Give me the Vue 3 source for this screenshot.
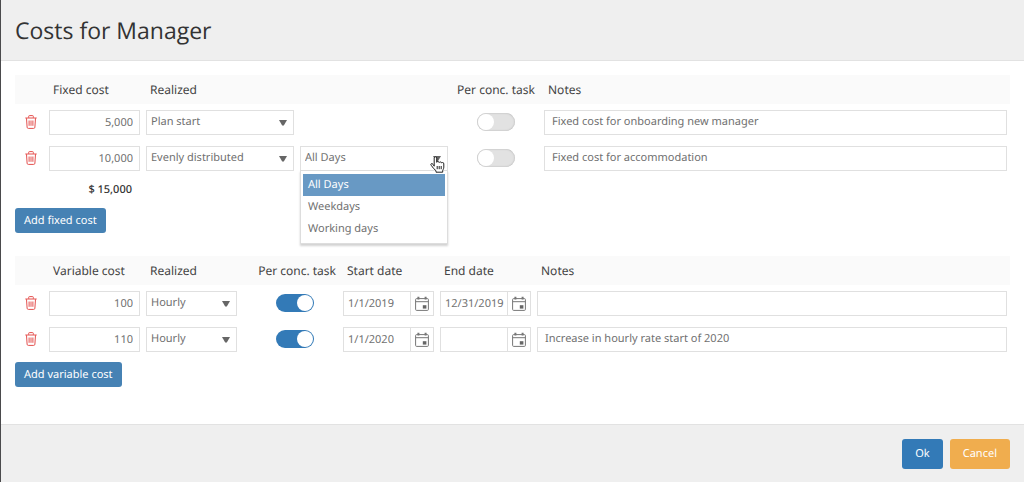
<script setup>
import { ref, reactive, computed } from 'vue'

const dayOptions = ['All Days', 'Weekdays', 'Working days']
const openList = ref(1)

const fixedCosts = reactive([
  { cost: '5,000', realized: 'Plan start', days: null, perTask: false, notes: 'Fixed cost for onboarding new manager' },
  { cost: '10,000', realized: 'Evenly distributed', days: 'All Days', perTask: false, notes: 'Fixed cost for accommodation' },
])

const variableCosts = reactive([
  { cost: '100', realized: 'Hourly', perTask: true, start: '1/1/2019', end: '12/31/2019', notes: '' },
  { cost: '110', realized: 'Hourly', perTask: true, start: '1/1/2020', end: '', notes: 'Increase in hourly rate start of 2020' },
])

const total = computed(() => {
  const sum = fixedCosts.reduce((acc, row) => acc + (Number(row.cost.replace(/,/g, '')) || 0), 0)
  return '$ ' + sum.toLocaleString('en-US')
})

function addFixed() {
  fixedCosts.push({ cost: '', realized: 'Plan start', days: null, perTask: false, notes: '' })
}

function addVariable() {
  variableCosts.push({ cost: '', realized: 'Hourly', perTask: true, start: '', end: '', notes: '' })
}

function pickDay(row, option) {
  row.days = option
  openList.value = -1
}
</script>

<template>
  <main class="dialog">
    <header class="dialog-header">
      <h1>Costs for Manager</h1>
    </header>

    <div class="dialog-body">
      <section>
        <table>
          <colgroup>
            <col class="col-icon" /><col class="col-field" /><col class="col-wide" /><col class="col-wide" /><col class="col-task" /><col />
          </colgroup>
          <thead>
            <tr>
              <th></th>
              <th>Fixed cost</th>
              <th>Realized</th>
              <th></th>
              <th class="center">Per conc. task</th>
              <th>Notes</th>
            </tr>
          </thead>
          <tbody>
            <tr v-for="(row, i) in fixedCosts" :key="i">
              <td>
                <button class="trash" type="button" aria-label="Delete fixed cost" @click="fixedCosts.splice(i, 1)">
                  <svg viewBox="0 0 12 14" width="12" height="14"><path d="M.3 3h11.4M3.7 2.8V1.3q0-.7.7-.7h3.2q.7 0 .7.7v1.5M1.5 3.2l.6 9q.1 1.2 1.2 1.2h5.4q1.1 0 1.2-1.2l.6-9M4.1 5.5v5.3M6 5.5v5.3M7.9 5.5v5.3" /></svg>
                </button>
              </td>
              <td><input v-model="row.cost" class="field number" type="text" aria-label="Fixed cost" /></td>
              <td>
                <div class="picker">
                  <select v-model="row.realized" class="field" aria-label="Realized">
                    <option>Plan start</option>
                    <option>Evenly distributed</option>
                  </select>
                  <svg class="arrow" viewBox="0 0 8 6" width="8" height="6"><path d="M0 0h8L4.8 5.6H3.2z" /></svg>
                </div>
              </td>
              <td>
                <div v-if="row.days" class="picker">
                  <select v-model="row.days" class="field" aria-label="Days">
                    <option v-for="o in dayOptions" :key="o">{{ o }}</option>
                  </select>
                  <svg class="arrow" viewBox="0 0 8 6" width="8" height="6"><path d="M0 0h8L4.8 5.6H3.2z" /></svg>
                  <ul v-if="openList === i" class="menu" role="listbox" aria-label="Days">
                    <li v-for="o in dayOptions" :key="o" role="option" :aria-selected="o === row.days" :class="{ active: o === row.days }" @click="pickDay(row, o)">{{ o }}</li>
                  </ul>
                  <svg v-if="openList === i" class="pointer" viewBox="0 0 15 17" width="15" height="17"><path d="M4.2 10.2V2.1q0-1.3 1.2-1.3t1.3 1.3v4.2q.3-.8 1.2-.8 1 0 1.3 1 .3-.6 1.1-.6 1 0 1.3 1 .3-.4 1-.4 1.2 0 1.2 1.4v3.2q0 1.3-.6 2.3l-.5 1v1.8H6v-1.5L3.7 12.6 1.2 9.3q-.8-1 .1-1.6.8-.5 1.7.6zM7.2 10v3.2M9.2 10v3.2M11.2 10v3.2" /></svg>
                </div>
              </td>
              <td class="center"><input v-model="row.perTask" class="switch" type="checkbox" aria-label="Per concurrent task" /></td>
              <td><input v-model="row.notes" class="field notes" type="text" aria-label="Notes" /></td>
            </tr>
          </tbody>
          <tfoot>
            <tr>
              <td></td>
              <td class="total">{{ total }}</td>
              <td colspan="4"></td>
            </tr>
          </tfoot>
        </table>
        <button class="add" type="button" @click="addFixed">Add fixed cost</button>
      </section>

      <section>
        <table>
          <colgroup>
            <col class="col-icon" /><col class="col-field" /><col class="col-field" /><col class="col-toggle" /><col class="col-field" /><col class="col-field" /><col />
          </colgroup>
          <thead>
            <tr>
              <th></th>
              <th>Variable cost</th>
              <th>Realized</th>
              <th class="right">Per conc. task</th>
              <th>Start date</th>
              <th>End date</th>
              <th>Notes</th>
            </tr>
          </thead>
          <tbody>
            <tr v-for="(row, i) in variableCosts" :key="i">
              <td>
                <button class="trash" type="button" aria-label="Delete variable cost" @click="variableCosts.splice(i, 1)">
                  <svg viewBox="0 0 12 14" width="12" height="14"><path d="M.3 3h11.4M3.7 2.8V1.3q0-.7.7-.7h3.2q.7 0 .7.7v1.5M1.5 3.2l.6 9q.1 1.2 1.2 1.2h5.4q1.1 0 1.2-1.2l.6-9M4.1 5.5v5.3M6 5.5v5.3M7.9 5.5v5.3" /></svg>
                </button>
              </td>
              <td><input v-model="row.cost" class="field number" type="text" aria-label="Variable cost" /></td>
              <td>
                <div class="picker">
                  <select v-model="row.realized" class="field" aria-label="Realized">
                    <option>Hourly</option>
                  </select>
                  <svg class="arrow" viewBox="0 0 8 6" width="8" height="6"><path d="M0 0h8L4.8 5.6H3.2z" /></svg>
                </div>
              </td>
              <td class="toggle-cell"><input v-model="row.perTask" class="switch" type="checkbox" aria-label="Per concurrent task" /></td>
              <td v-for="key in ['start', 'end']" :key="key">
                <div class="date">
                  <input v-model="row[key]" type="text" :aria-label="key === 'start' ? 'Start date' : 'End date'" />
                  <button type="button" aria-label="Open calendar">
                    <svg viewBox="0 0 14 15" width="14" height="15"><path d="M1.6 2.6h10.8q1 0 1 1v9.8q0 1-1 1H1.6q-1 0-1-1V3.6q0-1 1-1zM.6 5.7h12.8" /><path d="M3.4.8v2.6M10.6.8v2.6" class="rings" /><path d="M7.8 9.2h3.6v3.4H7.8z" class="day" /></svg>
                  </button>
                </div>
              </td>
              <td><input v-model="row.notes" class="field notes" type="text" aria-label="Notes" /></td>
            </tr>
          </tbody>
        </table>
        <button class="add" type="button" @click="addVariable">Add variable cost</button>
      </section>
    </div>

    <footer class="dialog-footer">
      <button class="ok" type="button">Ok</button>
      <button class="cancel" type="button">Cancel</button>
    </footer>
  </main>
</template>

<style>
body {
  margin: 0;
}
</style>

<style scoped>
.dialog,
.dialog * {
  box-sizing: border-box;
}
.dialog {
  display: flex;
  flex-direction: column;
  min-height: 100vh;
  border-left: 1px solid #4a4a4c;
  background: #fff;
  color: #444;
  font-family: "Noto Sans", "Open Sans", sans-serif;
  font-size: 11px;
  line-height: 16px;
  text-rendering: geometricPrecision;
}
button,
input,
select {
  margin: 0;
  font: inherit;
  text-rendering: inherit;
}
button {
  cursor: pointer;
}
.dialog-header {
  padding: 14px;
  background: #efefef;
  border-bottom: 1px solid #e2e2e2;
}
h1 {
  margin: 0;
  color: #333;
  font-family: "Open Sans", "Noto Sans", sans-serif;
  font-size: 23px;
  font-weight: 400;
  line-height: 32px;
}
.dialog-body {
  display: flex;
  flex: 1;
  flex-direction: column;
  gap: 23px;
  padding: 14px;
}
table {
  width: 100%;
  border-collapse: collapse;
  table-layout: fixed;
}
.col-icon {
  width: 31px;
}
.col-field {
  width: 97px;
}
.col-wide {
  width: 154px;
}
.col-task {
  width: 90px;
}
.col-toggle {
  width: 100px;
}
th {
  height: 29px;
  padding: 0 6px;
  padding-left: 7px;
  background: #fafafa;
  font-size: 12px;
  font-weight: 400;
  text-align: left;
  white-space: nowrap;
}
th.center {
  padding: 0;
  text-align: center;
}
th.right {
  padding: 0 4px;
  text-align: right;
}
td {
  height: 36px;
  padding: 0 3px;
  vertical-align: middle;
}
.center {
  text-align: center;
}
.toggle-cell {
  padding-left: 36px;
}
.field {
  display: block;
  width: 100%;
  height: 25px;
  padding: 0 4px;
  border: 1px solid #e0e0e0;
  border-radius: 0;
  outline: 0;
  background: #fff;
  color: #707070;
  appearance: none;
}
.number {
  padding: 1px 6px 0;
  text-align: right;
}
.notes {
  padding: 0 7px 2px;
}
.picker {
  position: relative;
}
.arrow {
  position: absolute;
  top: 10px;
  right: 7px;
  fill: #666;
  pointer-events: none;
}
.menu {
  position: absolute;
  z-index: 1;
  top: 24px;
  left: 0;
  width: 100%;
  margin: 0;
  padding: 3px 2px;
  border: 1px solid #ddd;
  background: #fff;
  box-shadow: 0 2px 2px rgba(0, 0, 0, 0.18);
  color: #707070;
  list-style: none;
}
.menu li {
  padding: 3px 5px;
}
.menu .active {
  background: #6899c4;
  color: #fff;
}
.pointer {
  position: absolute;
  z-index: 2;
  top: 10px;
  right: 3px;
  fill: #fff;
  stroke: #222;
  stroke-width: 1;
  pointer-events: none;
}
.switch {
  display: inline-flex;
  width: 38px;
  height: 18px;
  padding: 1px;
  border-radius: 9px;
  background: #e2e2e2;
  box-shadow: inset 0 0 2px #aaa;
  vertical-align: middle;
  appearance: none;
}
.switch::before {
  width: 16px;
  height: 16px;
  border-radius: 8px;
  background: #fff;
  content: "";
}
.switch:checked {
  justify-content: flex-end;
  background: #337ab7;
  box-shadow: none;
}
.trash {
  display: block;
  margin-left: 7px;
  padding: 0;
  border: 0;
  background: none;
}
.trash svg {
  display: block;
  fill: none;
  stroke: #e4504e;
}
.date {
  display: flex;
  height: 25px;
  border: 1px solid #e0e0e0;
}
.date input {
  flex: 1;
  min-width: 0;
  padding: 1px 0 0 4px;
  border: 0;
  outline: 0;
  background: #fff;
  color: #707070;
}
.date button {
  display: flex;
  align-items: center;
  justify-content: center;
  width: 23px;
  padding: 0;
  border: 0;
  border-left: 1px solid #e0e0e0;
  background: #fff;
}
.date svg {
  fill: none;
  stroke: #777;
}
.date .rings {
  stroke-width: 2;
}
.date .day {
  fill: #666;
  stroke: none;
}
.total {
  padding-right: 11px;
  color: #333;
  font-weight: 500;
  text-align: right;
}
.add,
.ok,
.cancel {
  border: 0;
  border-radius: 3px;
  background: #337ab7;
  color: #fff;
}
.add {
  display: block;
  height: 25px;
  margin-top: 5px;
  padding: 0 9px;
  background: #4682b4;
}
tfoot td {
  height: 27px;
}
.dialog-footer {
  display: flex;
  justify-content: flex-end;
  gap: 7px;
  padding: 14px 14px 13px;
  border-top: 1px solid #e2e2e2;
  background: #efefef;
}
.ok,
.cancel {
  height: 30px;
  padding: 0 13px;
}
.cancel {
  background: #f0ad4e;
}
</style>
